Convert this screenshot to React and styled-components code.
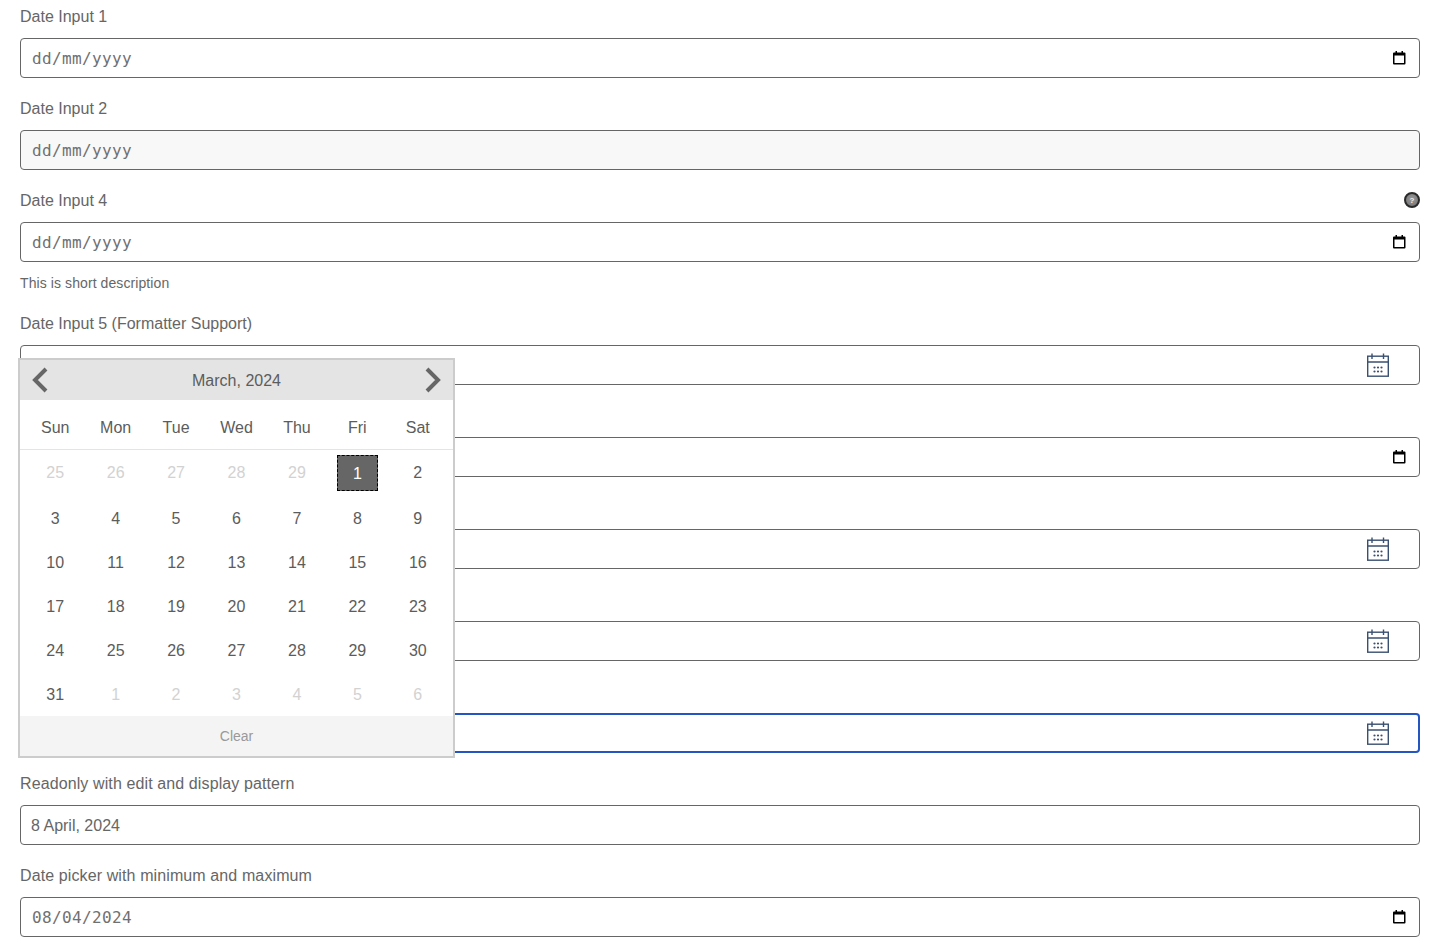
import React from "react";
import styled, { createGlobalStyle } from "styled-components";

const GlobalStyle = createGlobalStyle`
  html, body {
    margin: 0;
    padding: 0;
    background: #fff;
    font-family: "Liberation Sans", Arial, sans-serif;
  }
`;

const Page = styled.div`
  position: relative;
  display: flex;
  flex-direction: column;
  gap: 18px;
  padding: 4px 20px 14px;
`;

const Field = styled.div`
  display: flex;
  flex-direction: column;
`;

const LabelRow = styled.div`
  display: flex;
  align-items: center;
  justify-content: space-between;
  height: 24px;
  margin-bottom: 10px;
`;

const Label = styled.label`
  padding-top: 2px;
  font-size: 16px;
  letter-spacing: ${(p) => (p.$wide ? "0.11px" : "0")};
  color: #666;
`;

const InputBox = styled.div`
  display: flex;
  align-items: center;
  box-sizing: border-box;
  height: 40px;
  padding: 0 ${(p) => (p.$focused ? "10px" : "11px")};
  border: ${(p) => (p.$focused ? "2px solid #2356c0" : "1px solid #666")};
  border-radius: 4px;
  background: ${(p) => (p.$disabled ? "#f8f8f8" : "#fff")};
`;

const NativeText = styled.span`
  flex: 1;
  font-family: "DejaVu Sans Mono", monospace;
  font-size: 16px;
  letter-spacing: 0.37px;
  color: #707070;
`;

const PlainText = styled.span`
  flex: 1;
  margin-left: -1px;
  padding-top: 2px;
  font-size: 16px;
  color: #666;
`;

const NativeIcon = styled.svg`
  width: 16px;
  height: 16px;
  margin-right: 1px;
`;

const CalendarIcon = styled.svg`
  width: 24px;
  height: 24px;
  margin-right: 18px;
`;

const HelpIcon = styled.span`
  display: flex;
  align-items: center;
  justify-content: center;
  box-sizing: border-box;
  width: 16px;
  height: 16px;
  border: 2px solid #2a2a2a;
  border-radius: 50%;
  background: radial-gradient(circle at 50% 40%, #9a9a9a, #707070);
  color: #eee;
  font-size: 8px;
  font-weight: 700;
`;

const Description = styled.div`
  margin-top: 11px;
  height: 20px;
  line-height: 20px;
  font-size: 14px;
  letter-spacing: 0.09px;
  color: #666;
`;

const Calendar = styled.div`
  position: absolute;
  top: 358px;
  left: 18px;
  z-index: 10;
  box-sizing: border-box;
  width: 437px;
  border: 2px solid #ccc;
  background: #fff;
`;

const CalendarHeader = styled.div`
  display: flex;
  align-items: center;
  justify-content: space-between;
  height: 40px;
  padding: 0 11px;
  background: #e4e4e4;
  font-size: 16px;
  color: #5c5c5c;
`;

const MonthTitle = styled.span`
  padding-top: 1px;
`;

const Chevron = styled.svg`
  width: 18px;
  height: 26px;
`;

const Grid = styled.div`
  display: grid;
  grid-template-columns: repeat(7, 1fr);
  padding: 0 5px;
`;

const WeekRow = styled(Grid)`
  box-sizing: border-box;
  height: 50px;
  padding-top: 7px;
  align-items: center;
  border-bottom: 1px solid #e4e4e4;
  font-size: 16px;
  color: #5c5c5c;
`;

const WeekDay = styled.div`
  text-align: center;
`;

const DayGrid = styled(Grid)`
  grid-template-rows: 46px repeat(5, 44px);
`;

const Day = styled.div`
  display: flex;
  align-items: center;
  justify-content: center;
  padding-top: ${(p) => (p.$firstRow ? "0" : "1px")};
  font-size: 16px;
  color: ${(p) => (p.$muted ? "#d2d2d2" : "#5c5c5c")};
`;

const SelectedDay = styled.span`
  display: flex;
  align-items: center;
  justify-content: center;
  box-sizing: border-box;
  width: 41px;
  height: 36px;
  padding-top: 1px;
  border: 1px dashed #000;
  background: #666;
  color: #fff;
`;

const ClearBar = styled.div`
  display: flex;
  align-items: center;
  justify-content: center;
  height: 40px;
  background: #f4f4f4;
  font-size: 14px;
  color: #999;
`;

const NativeCalendar = () => (
  <NativeIcon viewBox="0 0 16 16">
    <path
      fill="#000"
      fillRule="evenodd"
      d="M4.5 1H6v1.5h4.5V1H12v1.5h1.5a1 1 0 0 1 1 1v10a1 1 0 0 1-1 1H3a1 1 0 0 1-1-1v-10a1 1 0 0 1 1-1h1.5V1zM3.5 5.5V13H13V5.5H3.5z"
    />
  </NativeIcon>
);

const BlueCalendar = () => (
  <CalendarIcon viewBox="0 0 24 24" fill="none" stroke="#3a5070">
    <rect x="1.7" y="3.2" width="20.6" height="20" strokeWidth="1.4" />
    <path d="M1.7 9h20.6M6 .5V6M17.5 .5V6" strokeWidth="1.4" />
    <g fill="#3a5070" stroke="none">
      {[8.5, 12, 15.5].map((x) =>
        [14.5, 18.5].map((y) => <circle key={`${x}-${y}`} cx={x} cy={y} r="1.1" />)
      )}
    </g>
  </CalendarIcon>
);

const weekDays = ["Sun", "Mon", "Tue", "Wed", "Thu", "Fri", "Sat"];

const days = [
  ...[25, 26, 27, 28, 29].map((d) => ({ d, muted: true })),
  ...Array.from({ length: 31 }, (_, i) => ({ d: i + 1 })),
  ...[1, 2, 3, 4, 5, 6].map((d) => ({ d, muted: true })),
];

// the labels of the fields behind the open calendar can't be seen, so they stay empty
const fields = [
  { label: "Date Input 1", type: "native", text: "dd/mm/yyyy" },
  { label: "Date Input 2", type: "disabled", text: "dd/mm/yyyy" },
  {
    label: "Date Input 4",
    type: "native",
    text: "dd/mm/yyyy",
    help: true,
    description: "This is short description",
  },
  { label: "Date Input 5 (Formatter Support)", type: "custom" },
  { type: "native" },
  { type: "custom" },
  { type: "custom" },
  { type: "custom", focused: true },
  {
    label: "Readonly with edit and display pattern",
    type: "plain",
    text: "8 April, 2024",
    wide: true,
  },
  {
    label: "Date picker with minimum and maximum",
    type: "native",
    text: "08/04/2024",
    wide: true,
  },
];

export default function App() {
  return (
    <Page>
      <GlobalStyle />
      {fields.map((f, index) => (
        <Field key={index}>
          <LabelRow>
            <Label $wide={f.wide}>{f.label}</Label>
            {f.help && <HelpIcon>?</HelpIcon>}
          </LabelRow>
          <InputBox $disabled={f.type === "disabled"} $focused={f.focused}>
            {f.type === "plain" ? (
              <PlainText>{f.text}</PlainText>
            ) : (
              <NativeText>{f.text}</NativeText>
            )}
            {f.type === "native" && <NativeCalendar />}
            {f.type === "custom" && <BlueCalendar />}
          </InputBox>
          {f.description && <Description>{f.description}</Description>}
        </Field>
      ))}
      <Calendar>
        <CalendarHeader>
          <Chevron viewBox="0 0 18 26" fill="none" stroke="#666" strokeWidth="4">
            <path d="M15 2 4 13l11 11" />
          </Chevron>
          <MonthTitle>March, 2024</MonthTitle>
          <Chevron viewBox="0 0 18 26" fill="none" stroke="#666" strokeWidth="4">
            <path d="m3 2 11 11L3 24" />
          </Chevron>
        </CalendarHeader>
        <WeekRow>
          {weekDays.map((w) => (
            <WeekDay key={w}>{w}</WeekDay>
          ))}
        </WeekRow>
        <DayGrid>
          {days.map((item, i) => (
            <Day key={i} $muted={item.muted} $firstRow={i < 7}>
              {!item.muted && item.d === 1 ? (
                <SelectedDay>{item.d}</SelectedDay>
              ) : (
                item.d
              )}
            </Day>
          ))}
        </DayGrid>
        <ClearBar>Clear</ClearBar>
      </Calendar>
    </Page>
  );
}
